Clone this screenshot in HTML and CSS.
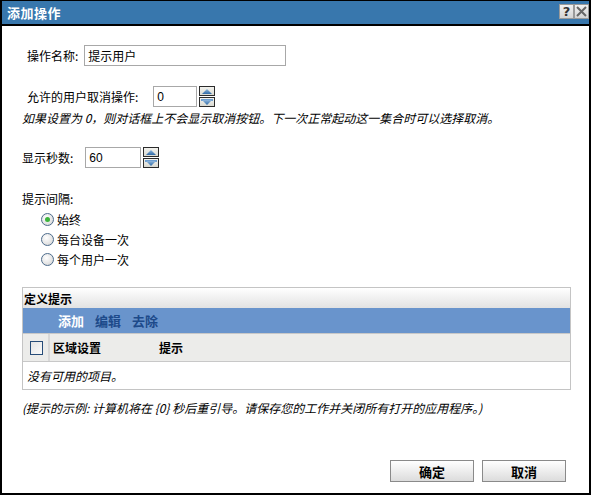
FILE: index.html
```html
<!DOCTYPE html>
<html lang="zh">
<head>
<meta charset="utf-8">
<title>添加操作</title>
<link rel="stylesheet" href="styles.css">
</head>
<body>
<div class="dialog">
  <div class="titlebar">
    <span class="title">添加操作</span>
    <div class="tb-buttons">
      <span class="tb-btn help">?</span>
      <span class="tb-btn close"><svg width="11" height="11" viewBox="0 0 11 11"><path d="M1 1L10 10M10 1L1 10" stroke="#666" stroke-width="2"/></svg></span>
    </div>
  </div>
  <div class="content">
    <div class="row row-name indent">
      <label class="lbl">操作名称:</label>
      <div class="input input-name">提示用户</div>
    </div>
    <div class="row row-cancel indent">
      <label class="lbl">允许的用户取消操作:</label>
      <div class="input input-num">0</div>
      <div class="spin">
        <svg width="16" height="21" viewBox="0 0 16 21">
          <defs>
            <linearGradient id="bg" x1="0" y1="0" x2="0" y2="1"><stop offset="0" stop-color="#f4f4f0"/><stop offset="1" stop-color="#d8d8d0"/></linearGradient>
            <linearGradient id="tri" x1="0" y1="0" x2="0" y2="1"><stop offset="0" stop-color="#8fb6dc"/><stop offset="1" stop-color="#2f6aa6"/></linearGradient>
          </defs>
          <rect x="0.5" y="0.5" width="15" height="9" fill="url(#bg)" stroke="#2b2b2b"/>
          <path d="M3 8L8 3L13 8Z" fill="url(#tri)"/>
          <rect x="0.5" y="11.5" width="15" height="9" fill="url(#bg)" stroke="#2b2b2b"/>
          <rect x="2" y="13" width="12" height="2" fill="#6f9fd0"/>
          <path d="M3 14L8 19L13 14Z" fill="url(#tri)"/>
        </svg>
      </div>
    </div>
    <div class="hint">如果设置为 0，则对话框上不会显示取消按钮。下一次正常起动这一集合时可以选择取消。</div>
    <div class="row row-secs">
      <label class="lbl">显示秒数:</label>
      <div class="input input-secs">60</div>
      <div class="spin">
        <svg width="16" height="21" viewBox="0 0 16 21">
          <rect x="0.5" y="0.5" width="15" height="9" fill="url(#bg)" stroke="#2b2b2b"/>
          <path d="M3 8L8 3L13 8Z" fill="url(#tri)"/>
          <rect x="0.5" y="11.5" width="15" height="9" fill="url(#bg)" stroke="#2b2b2b"/>
          <rect x="2" y="13" width="12" height="2" fill="#6f9fd0"/>
          <path d="M3 14L8 19L13 14Z" fill="url(#tri)"/>
        </svg>
      </div>
    </div>
    <div class="section-label">提示间隔:</div>
    <div class="radios">
      <div class="radio-row"><span class="radio checked"></span><span>始终</span></div>
      <div class="radio-row"><span class="radio"></span><span>每台设备一次</span></div>
      <div class="radio-row"><span class="radio"></span><span>每个用户一次</span></div>
    </div>
    <div class="panel">
      <div class="panel-title">定义提示</div>
      <div class="toolbar">
        <span class="tool active">添加</span>
        <span class="tool">编辑</span>
        <span class="tool">去除</span>
      </div>
      <div class="thead">
        <div class="th-check"><span class="checkbox"></span></div>
        <div class="th-col th-locale">区域设置</div>
        <div class="th-col th-prompt">提示</div>
      </div>
      <div class="empty">没有可用的项目。</div>
    </div>
    <div class="example">(提示的示例: 计算机将在 {0} 秒后重引导。请保存您的工作并关闭所有打开的应用程序。)</div>
    <div class="buttons">
      <button class="btn">确定</button>
      <button class="btn">取消</button>
    </div>
  </div>
</div>
</body>
</html>
```
FILE: styles.css
```css
* { box-sizing: border-box; }
html, body { margin: 0; padding: 0; background: #fff; }
body {
  font-family: "Noto Sans CJK SC", "Liberation Sans", sans-serif;
  font-size: 12px;
  color: #000;
}
.dialog {
  width: 591px;
  height: 495px;
  border: 2px solid #000;
  border-top-width: 1px;
  display: flex;
  flex-direction: column;
  background: #fff;
}
.titlebar {
  height: 25px;
  background: #3877ad;
  border-bottom: 2px solid #000;
  display: flex;
  align-items: center;
  justify-content: space-between;
  padding: 0 0 0 5px;
  flex: none;
}
.title {
  color: #fff;
  font-weight: bold;
  font-size: 13px;
  letter-spacing: 0.5px;
}
.tb-buttons { display: flex; margin-top: -2px; }
.tb-btn {
  width: 15px;
  height: 15px;
  background: linear-gradient(#f2f2f2, #d4d4d4);
  border: 1px solid #9a9a9a;
  display: flex;
  align-items: center;
  justify-content: center;
  font-family: "DejaVu Sans", sans-serif;
  font-weight: bold;
  font-size: 13px;
  color: #333;
  line-height: 1;
}
.content {
  flex: 1;
  display: flex;
  flex-direction: column;
  padding: 0 0 0 20px;
}
.row {
  display: flex;
  align-items: center;
  height: 21px;
}
.indent { padding-left: 5px; }
.row-name { margin-top: 19px; }
.row-cancel { margin-top: 20px; }
.row-secs { margin-top: 21px; }
.lbl { white-space: nowrap; }
.input {
  height: 21px;
  border: 1px solid #a8a8a8;
  background: #fff;
  padding: 0 3px;
  display: flex;
  align-items: center;
  font-family: "Liberation Sans", "Noto Sans CJK SC", sans-serif;
}
.input-name { width: 202px; margin-left: 6px; font-family: "Noto Sans CJK SC", sans-serif; }
.input-num { width: 44px; margin-left: 15px; }
.input-secs { width: 56px; margin-left: 12px; }
.spin { margin-left: 2px; display: flex; height: 21px; }
.hint {
  font-style: italic;
  line-height: 16px;
  margin-top: 3px;
}
.section-label { margin-top: 23px; line-height: 16px; }
.radios { padding-left: 19px; margin-top: 2px; }
.radio-row {
  height: 20px;
  display: flex;
  align-items: center;
}
.radio {
  width: 13px;
  height: 13px;
  border-radius: 50%;
  border: 1px solid #4d6c8c;
  background: radial-gradient(circle at 40% 35%, #ffffff 0%, #e4e4e4 60%, #c8c8c8 100%);
  margin-right: 3px;
  display: inline-flex;
  align-items: center;
  justify-content: center;
}
.radio.checked::after {
  content: "";
  width: 5px;
  height: 5px;
  border-radius: 50%;
  background: #3cb43c;
}
.panel {
  margin-top: 18px;
  width: 549px;
  border: 1px solid #c4c4c4;
  display: flex;
  flex-direction: column;
}
.panel-title {
  height: 20px;
  background: linear-gradient(#ffffff, #e2e2e2);
  font-weight: bold;
  display: flex;
  align-items: center;
  padding-left: 1px;
}
.toolbar {
  height: 25px;
  background: #6994cc;
  display: flex;
  align-items: center;
  padding-left: 35px;
  gap: 11px;
}
.tool {
  font-weight: bold;
  color: #1d4a8a;
  font-size: 13px;
}
.tool.active { color: #fff; }
.thead {
  height: 29px;
  background: #ececea;
  border-top: 1px solid #c8c8c8;
  border-bottom: 1px solid #c8c8c8;
  display: flex;
  align-items: stretch;
}
.th-check {
  width: 27px;
  border-right: 2px solid #d8d8d8;
  display: flex;
  align-items: center;
  justify-content: center;
  padding-left: 2px;
}
.checkbox {
  width: 13px;
  height: 14px;
  border: 1px solid #274c78;
  background: linear-gradient(135deg, #e4e4e4, #fafafa);
}
.th-col {
  font-weight: bold;
  display: flex;
  align-items: center;
}
.th-locale { width: 109px; padding-left: 3px; }
.empty {
  height: 27px;
  font-style: italic;
  display: flex;
  align-items: center;
  padding-left: 4px;
}
.example {
  margin-top: 10px;
  font-style: italic;
  line-height: 16px;
}
.buttons {
  margin-top: 44px;
  display: flex;
  justify-content: flex-end;
  gap: 8px;
  padding-right: 23px;
}
.btn {
  width: 84px;
  height: 22px;
  border: 1px solid #8a8a8a;
  background: linear-gradient(#ffffff, #dcdcdc);
  font-family: "Noto Sans CJK SC", sans-serif;
  font-weight: bold;
  font-size: 13px;
  padding: 0;
  color: #000;
}
```
